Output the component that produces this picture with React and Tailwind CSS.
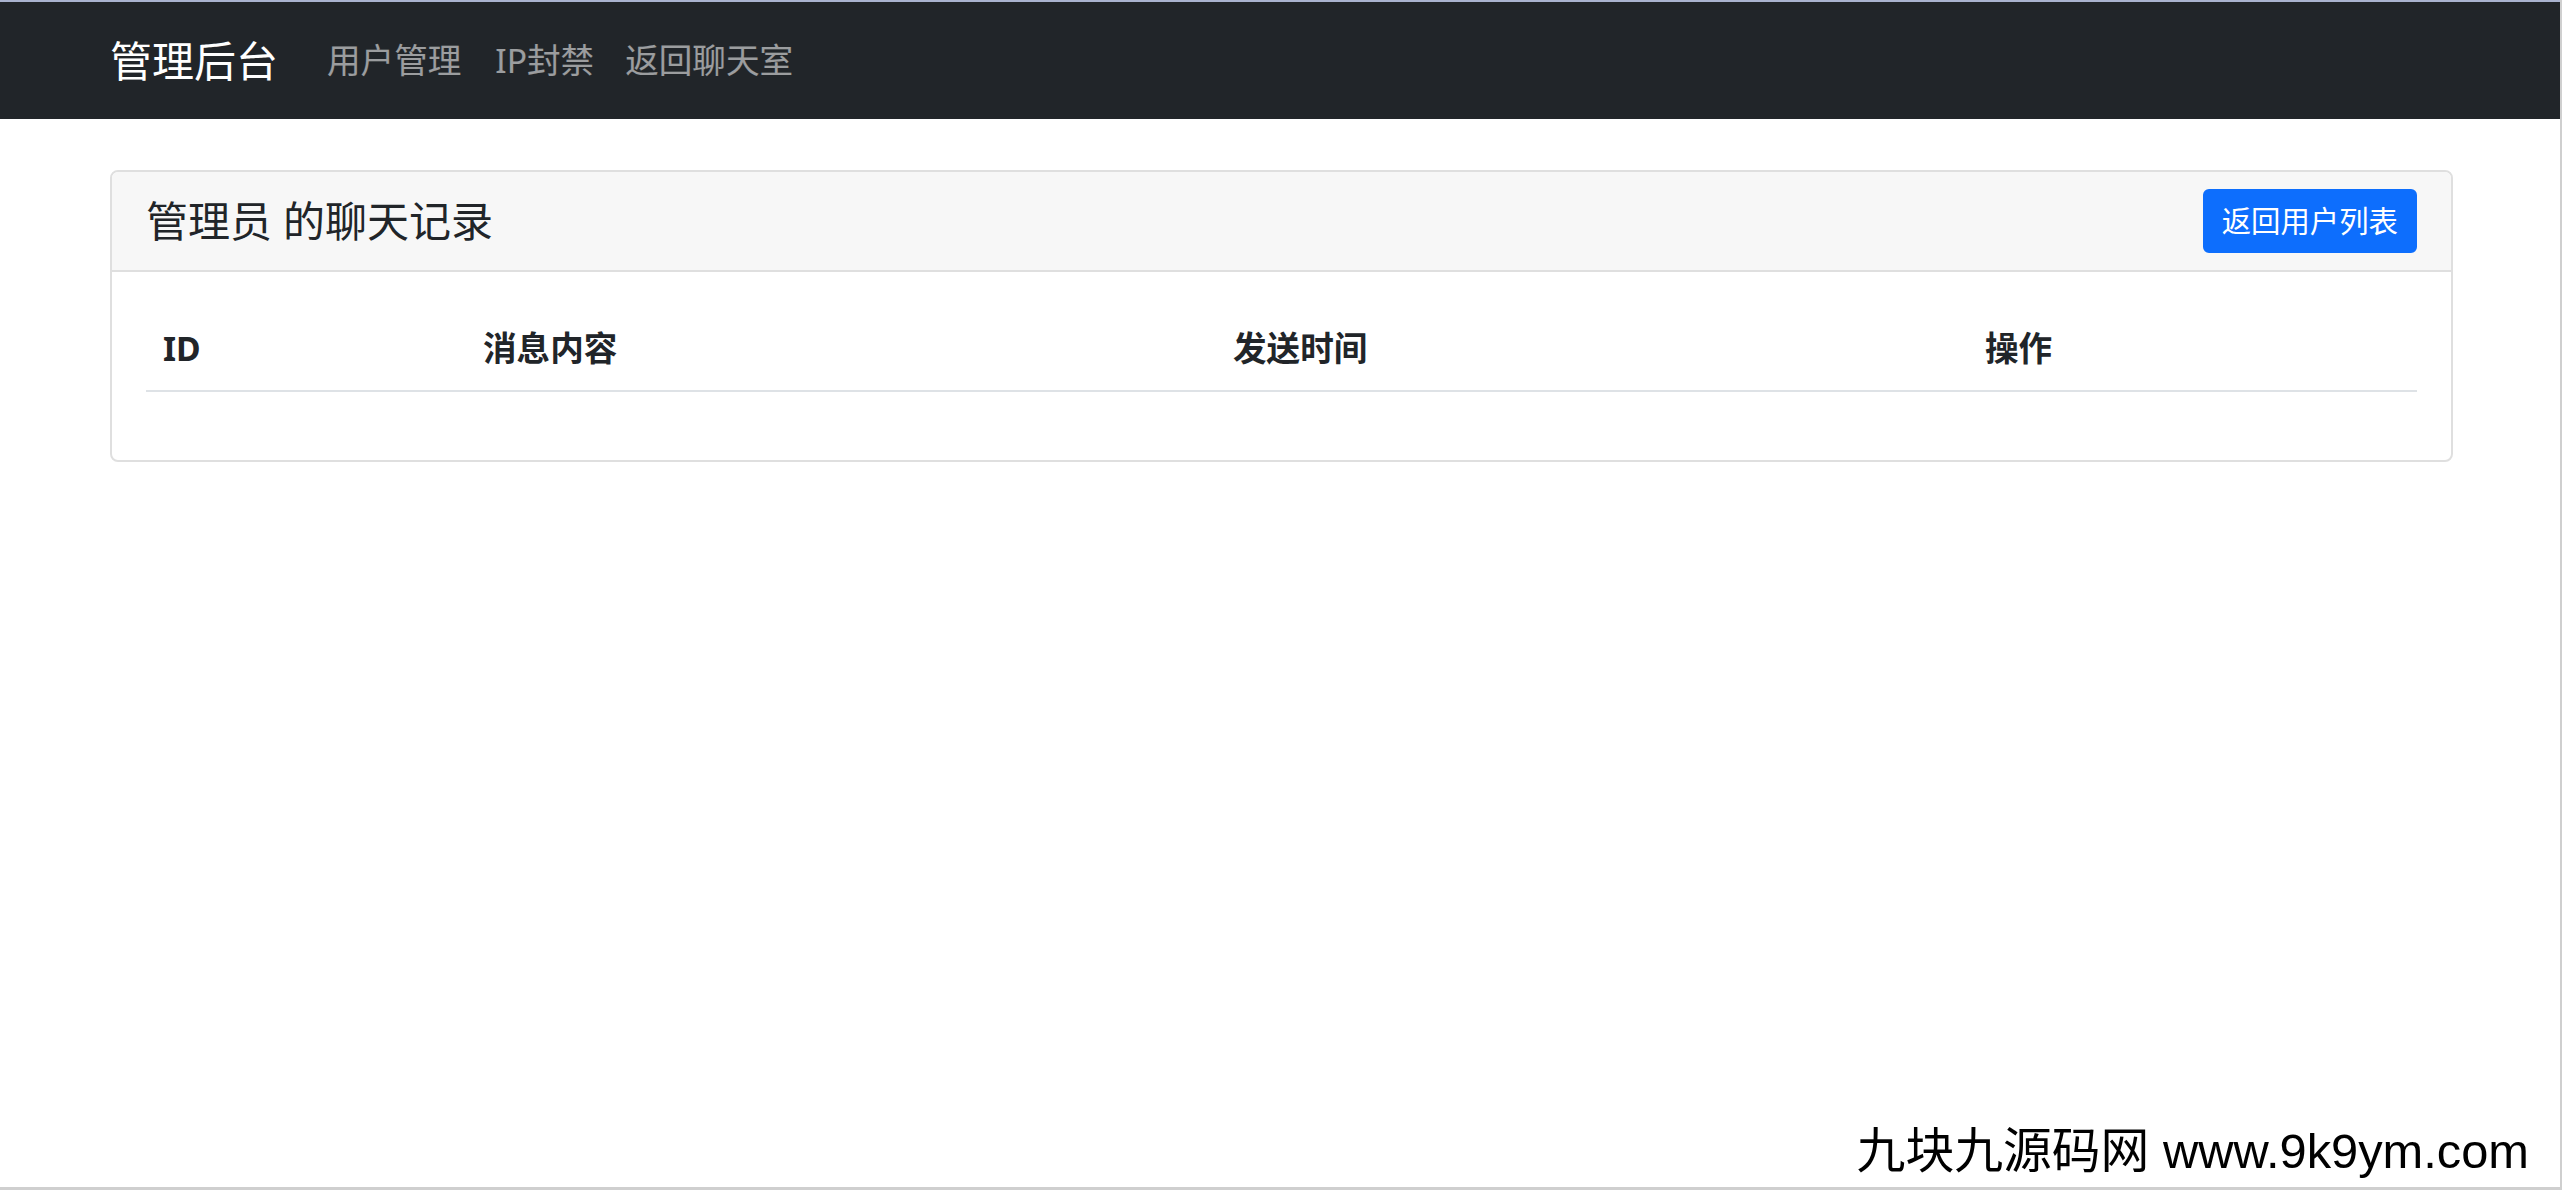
export default function App() {
  const cols = [
    { label: "ID" },
    { label: "消息内容" },
    { label: "发送时间" },
    { label: "操作" },
  ];
  return (
    <div className="relative w-full h-[1190px] overflow-hidden bg-white border-r-2 border-b-[3px] border-[#cfcfcf] font-['Noto_Sans','Noto_Sans_CJK_SC',sans-serif] text-[#212529]">
      <div className="h-[2px] bg-[#aab3cf]" />
      <nav className="h-[117px] bg-[#212529] flex items-center pl-[110px] pr-[107px]">
        <a className="text-[42px] leading-[1.5] text-white mr-[32px] cursor-pointer">管理后台</a>
        <div className="flex items-center">
          <a className="px-[17px] text-[33.6px] leading-[1.5] text-white/55 cursor-pointer">用户管理</a>
          <a className="px-[17px] text-[33.6px] leading-[1.5] text-white/55 cursor-pointer">IP封禁</a>
          <a className="pl-[14px] pr-[17px] text-[33.6px] leading-[1.5] text-white/55 cursor-pointer">返回聊天室</a>
        </div>
      </nav>
      <main className="pl-[110px] pr-[107px] pt-[51px]">
        <div className="border-2 border-[#dfdfdf] rounded-[8px] overflow-hidden">
          <div className="flex items-center justify-between bg-[#f7f7f7] border-b-2 border-[#dfdfdf] px-[34px] py-[17px]">
            <h5 className="text-[42px] leading-[1.2] font-normal">管理员 的聊天记录</h5>
            <button className="h-[64px] px-[17px] flex items-center rounded-[6px] bg-[#0d6efd] border-2 border-[#0d6efd] text-white text-[29.4px] leading-[1.5]">
              返回用户列表
            </button>
          </div>
          <div className="p-[34px]">
            <div className="grid grid-cols-[320px_750px_752px_1fr] border-b-2 border-[#dee2e6]">
              {cols.map((c) => (
                <div key={c.label} className="px-[17px] py-[17px] text-[33.6px] leading-[50px] font-bold">
                  {c.label}
                </div>
              ))}
            </div>
            <div className="h-[34px]" />
          </div>
        </div>
      </main>
      <div className="absolute right-[31px] bottom-[11px] text-[48.8px] leading-none text-black font-['Liberation_Sans','Noto_Sans_CJK_SC',sans-serif]">
        九块九源码网 www.9k9ym.com
      </div>
    </div>
  );
}
